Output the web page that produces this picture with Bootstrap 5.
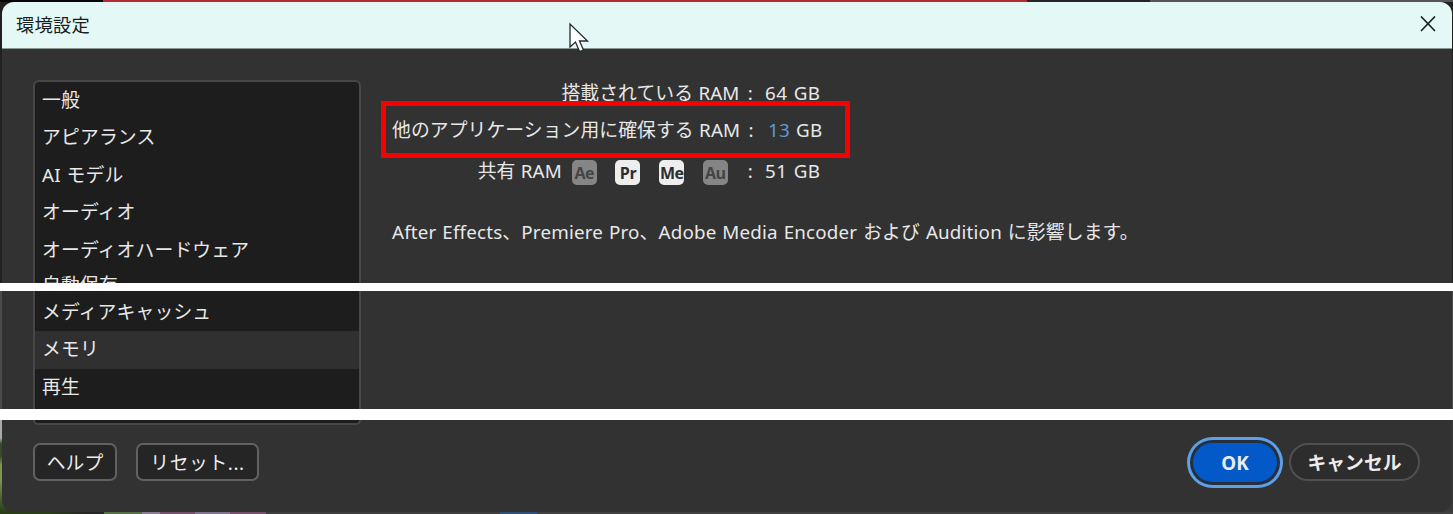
<!DOCTYPE html>
<html lang="ja">
<head>
  <meta charset="UTF-8">
  <meta name="viewport" content="width=device-width, initial-scale=1.0">
  <title>環境設定</title>
  <link href="https://cdn.jsdelivr.net/npm/bootstrap@5.3.3/dist/css/bootstrap.min.css" rel="stylesheet">
  <style>
    body {
      background: #fff;
      color: #e8e8e8;
      font-family: "Noto Sans", "Noto Sans CJK JP", sans-serif;
      font-size: 18.8px;
      line-height: 37.4px;
      letter-spacing: .18px;
      word-spacing: .8px;
      width: 1453px;
      height: 514px;
      white-space: nowrap;
    }
    /* franjas de la ventana */
    .franja { padding: 0 1px 0 2px; background: #262626; }
    .franja-1 {
      height: 283px;
      padding-top: 2px;
      background: linear-gradient(90deg, #070707 103px, #b52b31 103px 1027px, #262626 1027px 1150px, #555 1150px) 0 0 / 100% 2px no-repeat, #202020;
    }
    .franja-2 { height: 118px; margin-top: 8px; background: #4b4b4b; }
    .franja-3 {
      height: 94px;
      margin-top: 11px;
      padding-bottom: 2px;
      background:
        linear-gradient(90deg, #2b3c18 50px, #262626 86px 104px, #587048 104px 142px, #8b7d91 142px 160px, #75516c 160px 195px, #80758c 195px 230px, #75516c 230px 266px, #3e3e3e 266px 500px, #2f5079 500px 537px, #414141 537px) 0 100% / 100% 2px no-repeat,
        linear-gradient(#aaa 18px, #344c25 24px 36px, #7f9552 45px 60px, #233812) 0 0 / 14px 100% no-repeat, #3c3c3c;
    }
    .panel { background: #323232; height: 100%; }
    .franja-1 .panel { border-radius: 12px 12px 0 0; overflow: hidden; }
    .franja-3 .panel { border-radius: 0 0 12px 12px; }

    .titulo {
      height: 47px;
      padding: 0 16px 1px 14px;
      background: #e4f8f6;
      border-bottom: 1px solid #8c9896;
      color: #182020;
      font-size: 18.3px;
    }
    .titulo svg { margin-bottom: 1px; }
    .lista {
      width: 328px;
      margin-left: 31px;
      background: #1d1d1d;
      border: 2px solid #474747;
      overflow: hidden;
      flex: none;
    }
    .lista-1 { height: 203px; margin-top: 31px; border-bottom: 0; border-radius: 6px 6px 0 0; }
    .lista-2 { height: 118px; border-width: 0 2px; padding-top: 3px; }
    .lista-3 { height: 5px; border-top: 0; border-radius: 0 0 6px 6px; }
    .opcion { padding-left: 7px; height: 37.4px; line-height: 37.4px; }
    .lista-1 .opcion { line-height: 36.4px; }
    .lista-1 .opcion:last-child { line-height: 33px; }
    .activa { background: #303030; }

    .memoria { margin-left: 31px; padding-top: 26px; }
    .dato { height: 36.5px; line-height: 36.5px; }
    .rotulo { width: 362px; text-align: right; padding-right: 1px; letter-spacing: .1px; word-spacing: .4px; }
    .dos-puntos { margin-left: 3px; }
    .valor { padding-left: 11px; letter-spacing: .5px; }
    .valor-azul { padding-left: 14px; letter-spacing: .3px; }
    .azul { color: #5b9bd8; }
    .iconos { gap: 18.7px; margin: 0 20px 0 10px; padding-top: 3px; }
    .app {
      width: 25px;
      height: 25px;
      border-radius: 5px;
      background: #eee;
      color: #2d2d2d;
      font: bold 16px/26px "Open Sans", sans-serif;
      letter-spacing: -.5px;
      text-align: center;
    }
    .apagada { background: #858585; color: #444; }
    .compartida { margin-top: 4.7px; }
    .nota { margin-top: 25px; }
    .marco {
      left: 381px;
      top: 101px;
      width: 469px;
      height: 57px;
      border: 5px solid #f80000;
    }
    .cursor { left: 568px; top: 22px; }

    .pie { padding: 18px 32px 0 31px; }
    .boton {
      --bs-btn-padding-x: 0;
      --bs-btn-padding-y: 0;
      --bs-btn-font-size: 18.8px;
      --bs-btn-color: #ececec;
      --bs-btn-bg: #252525;
      --bs-btn-border-color: #616161;
      --bs-btn-border-width: 2px;
      --bs-btn-border-radius: 7px;
      height: 38px;
      line-height: 37px;
    }
    .ayuda { width: 84px; }
    .reset { width: 123px; margin-left: 19px; letter-spacing: .6px; }
    .redondo { border-radius: 20px; font-weight: bold; }
    .cancelar { width: 131px; background: #2d2d2d; border-color: #505050; margin-left: 12px; }
    .ok {
      width: 84px;
      height: 39px;
      line-height: 41px;
      background: #0259c7;
      border: 0;
      box-shadow: 0 0 0 3px #25303c, 0 0 0 6px #5f9fe8;
    }
  </style>
</head>
<body>

  <div class="franja franja-1">
    <div class="panel">
      <div class="titulo d-flex align-items-center justify-content-between">
        <span>環境設定</span>
        <svg width="16" height="16" viewBox="0 0 16 16" fill="none" stroke="#1b2525" stroke-width="1.7"><path d="M1 .5 15 15M15 .5 1 15"/></svg>
      </div>
      <div class="d-flex">
        <div class="lista lista-1">
          <div class="opcion">一般</div>
          <div class="opcion">アピアランス</div>
          <div class="opcion">AI モデル</div>
          <div class="opcion">オーディオ</div>
          <div class="opcion">オーディオハードウェア</div>
          <div class="opcion">自動保存</div>
        </div>
        <div class="memoria">
          <div class="dato d-flex">
            <div class="rotulo">搭載されている RAM <span class="dos-puntos">:</span></div>
            <div class="valor">64 GB</div>
          </div>
          <div class="dato d-flex">
            <div class="rotulo">他のアプリケーション用に確保する RAM <span class="dos-puntos">:</span></div>
            <div class="valor-azul"><span class="azul">13</span> GB</div>
          </div>
          <div class="dato compartida d-flex">
            <div class="rotulo d-flex justify-content-end">
              <span>共有 RAM</span>
              <span class="iconos d-flex align-items-center">
                <span class="app apagada">Ae</span>
                <span class="app">Pr</span>
                <span class="app">Me</span>
                <span class="app apagada">Au</span>
              </span>
              <span>:</span>
            </div>
            <div class="valor">51 GB</div>
          </div>
          <div class="nota">After Effects、Premiere Pro、Adobe Media Encoder および Audition に影響します。</div>
        </div>
      </div>
    </div>
  </div>

  <div class="franja franja-2">
    <div class="panel">
      <div class="lista lista-2">
        <div class="opcion">メディアキャッシュ</div>
        <div class="opcion activa">メモリ</div>
        <div class="opcion">再生</div>
      </div>
    </div>
  </div>

  <div class="franja franja-3">
    <div class="panel">
      <div class="lista lista-3"></div>
      <div class="pie d-flex">
        <button type="button" class="btn boton ayuda">ヘルプ</button>
        <button type="button" class="btn boton reset">リセット...</button>
        <button type="button" class="btn boton redondo ok ms-auto">OK</button>
        <button type="button" class="btn boton redondo cancelar">キャンセル</button>
      </div>
    </div>
  </div>

  <div class="marco position-absolute"></div>
  <svg class="cursor position-absolute" width="22" height="32" viewBox="0 0 22 32"><path d="M2 2v23l5.500-5 4 9.500 4-1.500-4-9h8z" fill="#fff" stroke="#26282c" stroke-width="1.300"/></svg>

  <script src="https://cdn.jsdelivr.net/npm/bootstrap@5.3.3/dist/js/bootstrap.bundle.min.js"></script>
</body>
</html>
